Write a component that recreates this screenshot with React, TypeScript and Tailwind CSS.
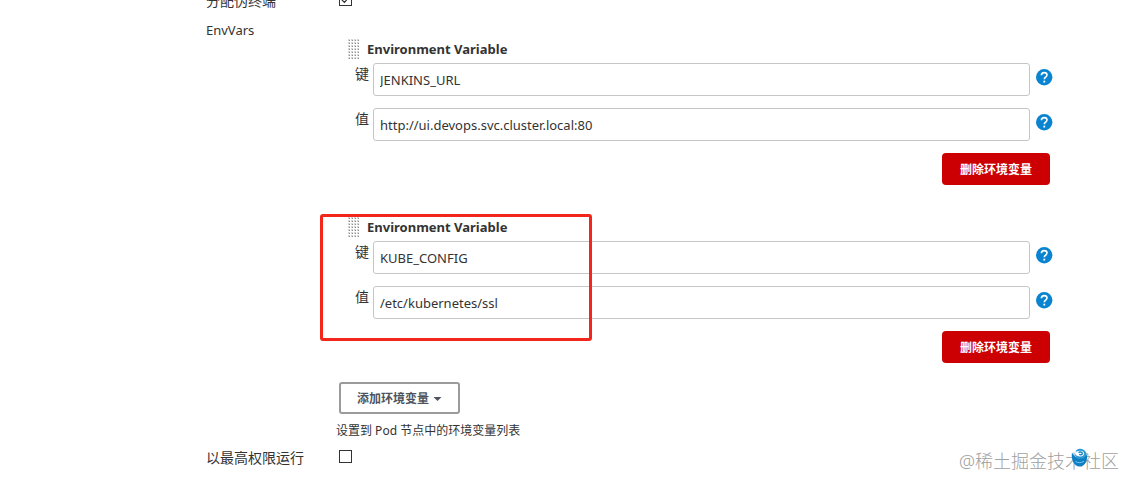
import React, { useState } from 'react';

interface EnvVar {
  id: string;
  key: string;
  value: string;
  highlighted?: boolean;
}

const initialVars: EnvVar[] = [
  { id: 'jenkins', key: 'JENKINS_URL', value: 'http://ui.devops.svc.cluster.local:80' },
  { id: 'kube', key: 'KUBE_CONFIG', value: '/etc/kubernetes/ssl', highlighted: true },
];

const HelpButton: React.FC<{ label: string }> = ({ label }) => (
  <button type="button" aria-label={label} className="mt-1.5 shrink-0">
    <svg className="size-[17px]" viewBox="0 0 17 17" fill="none">
      <circle cx="8.2" cy="8.2" r="8.2" fill="#0a84d0" />
      <path
        d="M5.4 6.3C5.4 4.6 6.6 3.6 8.2 3.6s2.8 1 2.8 2.5c0 2-2.7 2.1-2.7 4.2"
        stroke="#fff"
        strokeWidth="1.6"
      />
      <rect x="7.4" y="11.7" width="1.8" height="1.8" fill="#fff" />
    </svg>
  </button>
);

// Dotted drag handle
const DragHandle: React.FC = () => (
  <svg className="h-5 w-[11px]" viewBox="0 0 11 20" aria-hidden="true">
    {[0, 3, 6, 9].map((x) =>
      [0, 3, 6, 9, 12, 15, 18].map((y) => (
        <g key={`${x}-${y}`}>
          <rect x={x} y={y} width="2" height="2" fill="#d6d6d6" />
          <rect x={x + 1} y={y + 1} width="1" height="1" fill="#8c8c8c" />
        </g>
      ))
    )}
  </svg>
);

interface CheckboxProps {
  id: string;
  checked: boolean;
  onChange: (checked: boolean) => void;
}

const Checkbox: React.FC<CheckboxProps> = ({ id, checked, onChange }) => (
  <div className="grid size-[13px]">
    <input
      id={id}
      type="checkbox"
      checked={checked}
      onChange={(e) => onChange(e.target.checked)}
      className="col-start-1 row-start-1 size-[13px] appearance-none border border-[#333] bg-white"
    />
    {checked && (
      <svg
        className="pointer-events-none col-start-1 row-start-1 size-[13px]"
        viewBox="0 0 13 13"
        fill="none"
        stroke="#333"
        strokeWidth="1.2"
        aria-hidden="true"
      >
        <path d="M2.8 6.8l2.6 2.6 5-5.6" />
      </svg>
    )}
  </div>
);

interface FieldProps {
  id: string;
  label: string;
  value: string;
  onChange: (value: string) => void;
}

const Field: React.FC<FieldProps> = ({ id, label, value, onChange }) => (
  <div className="mb-3 flex items-start">
    <label htmlFor={id} className="mr-1 w-[21px] shrink-0 text-right leading-[22px]">
      {label}
    </label>
    <input
      id={id}
      type="text"
      value={value}
      onChange={(e) => onChange(e.target.value)}
      className="mr-1.5 h-[33px] min-w-0 flex-1 rounded-[3px] border border-[#c6c6c6] px-1.5 text-[13px]"
    />
    <HelpButton label={`帮助: ${label}`} />
  </div>
);

interface EnvVarBlockProps {
  item: EnvVar;
  onChange: (item: EnvVar) => void;
  onRemove: () => void;
}

const EnvVarBlock: React.FC<EnvVarBlockProps> = ({ item, onChange, onRemove }) => (
  <div className="relative pl-3">
    <div className="mb-1 flex items-center gap-2">
      <DragHandle />
      <b className="text-[13px]">Environment Variable</b>
    </div>
    <Field
      id={`${item.id}-key`}
      label="键"
      value={item.key}
      onChange={(key) => onChange({ ...item, key })}
    />
    <Field
      id={`${item.id}-value`}
      label="值"
      value={item.value}
      onChange={(value) => onChange({ ...item, value })}
    />
    <div className="flex justify-end pr-[3px]">
      <button
        type="button"
        onClick={onRemove}
        className="h-8 rounded bg-[#cc0003] px-[18px] pt-0.5 text-xs font-bold text-white"
      >
        删除环境变量
      </button>
    </div>
    {item.highlighted && (
      <div className="pointer-events-none absolute -top-[3px] -left-4 h-[127px] w-[272px] rounded-[3px] border-3 border-[#f3261b]" />
    )}
  </div>
);

export default function App() {
  const [envVars, setEnvVars] = useState<EnvVar[]>(initialVars);
  const [tty, setTty] = useState(true);
  const [privileged, setPrivileged] = useState(false);

  const updateVar = (item: EnvVar) => setEnvVars(envVars.map((v) => (v.id === item.id ? item : v)));
  const removeVar = (id: string) => setEnvVars(envVars.filter((v) => v.id !== id));
  const addVar = () => setEnvVars([...envVars, { id: `var-${Date.now()}`, key: '', value: '' }]);

  return (
    <div className="relative min-h-screen overflow-hidden bg-white pr-[72px] pl-[206px] font-['Noto_Sans','Noto_Sans_CJK_SC',sans-serif] text-sm leading-5 text-[#333]">
      <div className="-mt-[9px] mb-[9px] flex">
        <label htmlFor="tty" className="w-[130px] shrink-0">
          分配伪终端
        </label>
        <div className="px-[3px] pt-0.5">
          <Checkbox id="tty" checked={tty} onChange={setTty} />
        </div>
      </div>

      <div className="mb-1.5 flex">
        <div className="w-[130px] shrink-0 text-[13px]">EnvVars</div>
        <div className="min-w-0 flex-1 pt-[19px]">
          <div className="mb-[19px] flex flex-col gap-8">
            {envVars.map((item) => (
              <EnvVarBlock
                key={item.id}
                item={item}
                onChange={updateVar}
                onRemove={() => removeVar(item.id)}
              />
            ))}
          </div>
          <div className="px-[3px]">
            <button
              type="button"
              onClick={addVar}
              className="flex h-8 items-center gap-1 rounded-[3px] border-2 border-[#9b9b9b] px-4 pt-0.5 text-xs font-bold text-[#4d545d]"
            >
              添加环境变量
              <svg className="h-1 w-[9px]" viewBox="0 0 9 4" fill="currentColor" aria-hidden="true">
                <path d="M.5 0h8l-4 4z" />
              </svg>
            </button>
          </div>
          <p className="mt-[7px] text-xs leading-5">设置到 Pod 节点中的环境变量列表</p>
        </div>
      </div>

      <div className="flex">
        <label htmlFor="privileged" className="w-[130px] shrink-0 leading-[22px]">
          以最高权限运行
        </label>
        <div className="px-[3px] pt-[3px]">
          <Checkbox id="privileged" checked={privileged} onChange={setPrivileged} />
        </div>
      </div>

      <div className="absolute right-1.5 bottom-0.5 text-lg leading-7 font-light text-[#a0a0a0]">
        @稀土掘金技术社区
      </div>
      {/* Floating assistant badge */}
      <svg className="absolute right-9 bottom-2.5 size-[19px]" viewBox="0 0 19 19" fill="none" aria-hidden="true">
        <path d="M6 2.500C8.500-.2 14 0 16 4.500c1.200 3.500.5 7-1.500 10L11 12 5 8z" fill="#2b9bd8" />
        <path d="M2 4.500C4 8.500 8 11 12 10.500c2.500-.3 4-2 5-4.500 1 6-2 12.500-7.500 12.500S.8 11 2 4.500z" fill="#0b7fc4" />
        <path d="M5 5C7 2 13 1.800 14 5c.5 2.500-2 4-4.500 3.500S5.500 7.300 5 5z" fill="#fff" />
        <path d="M8.500 4.500c1.500-1 4-.4 3.800 1.200-.2 1.400-2.300 1.400-3 .4" stroke="#0b7fc4" strokeWidth="1.3" />
        <path d="M5.500 13.500c2.500 1.600 5.500 1.600 8.500-.3" stroke="#7cc6ee" strokeWidth="1" />
      </svg>
    </div>
  );
}
